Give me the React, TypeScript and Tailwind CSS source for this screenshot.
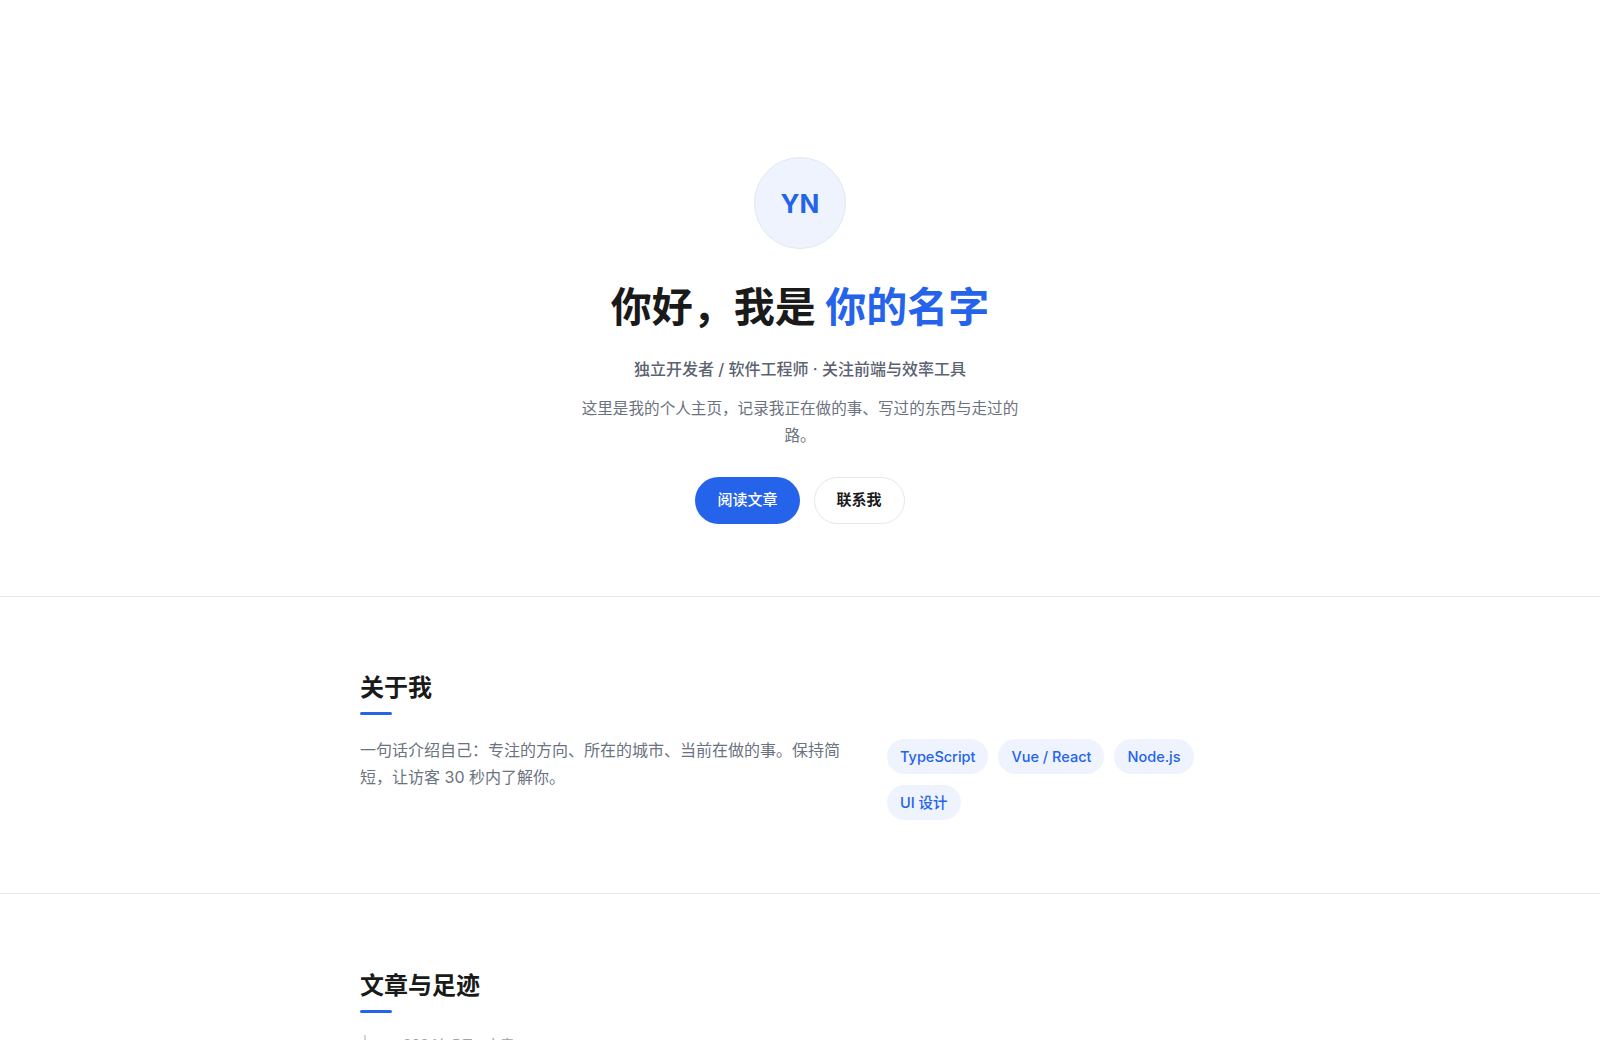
import React from 'react';

const FONT = 'font-[Inter,"Noto_Sans_CJK_SC",sans-serif]';

const skills = ['TypeScript', 'Vue / React', 'Node.js', 'UI 设计'];

const posts = [
  { meta: '2024年5月 · 文章', title: '从零搭建一个个人主页' },
  { meta: '2024年3月 · 足迹', title: '一次城市徒步的记录' },
];

function SectionTitle({ children }: { children: React.ReactNode }) {
  return (
    <div>
      <h2 className="text-[24px] leading-[32px] font-bold text-[#1a1a1a]">{children}</h2>
      <div className="mt-[8px] h-[3px] w-8 rounded-full bg-[#2563eb]" />
    </div>
  );
}

export default function App() {
  return (
    <div className={`${FONT} min-h-screen bg-white text-[#1a1a1a]`}>
      {/* Hero */}
      <header className="flex flex-col items-center pt-[157px] pb-[72px] text-center">
        <div className="flex h-[92px] w-[92px] items-center justify-center rounded-full border border-[#e2e7f0] bg-[#eef3fd] text-[26px] font-bold text-[#2563eb]">
          YN
        </div>
        <h1 className="mt-[34px] text-[41px] leading-[48px] font-bold tracking-normal text-[#1a1a1a]">
          你好，我是 <span className="text-[#2563eb]">你的名字</span>
        </h1>
        <p className="mt-[25px] text-[16px] leading-[26px] font-medium text-[#5b6270]">
          独立开发者 / 软件工程师 · 关注前端与效率工具
        </p>
        <p className="mt-[14px] max-w-[440px] text-[15.6px] leading-[26.5px] text-[#6b7280]">
          这里是我的个人主页，记录我正在做的事、写过的东西与走过的路。
        </p>
        <div className="mt-[28px] flex gap-[14px]">
          <button className="h-[47px] rounded-full bg-[#2563eb] px-[22px] text-[15px] font-medium text-white">
            阅读文章
          </button>
          <button className="h-[47px] rounded-full border border-[#e5e7eb] bg-white px-[22px] text-[15px] font-semibold text-[#1a1a1a]">
            联系我
          </button>
        </div>
      </header>

      {/* About */}
      <section className="border-t border-[#e5e7eb]">
        <div className="mx-auto max-w-[880px] pt-[75px] pb-[73px]">
          <SectionTitle>关于我</SectionTitle>
          <div className="mt-[22px] grid grid-cols-[487px_1fr] gap-10">
            <p className="text-[16px] leading-[27px] text-[#6b7280]">
              一句话介绍自己：专注的方向、所在的城市、当前在做的事。保持简短，让访客 30 秒内了解你。
            </p>
            <div className="mt-[2px] flex flex-wrap content-start gap-x-[10px] gap-y-[11px]">
              {skills.map((s) => (
                <span
                  key={s}
                  className="flex h-[35px] items-center rounded-full bg-[#eef3fd] px-[13px] text-[14.5px] font-medium text-[#2563eb]"
                >
                  {s}
                </span>
              ))}
            </div>
          </div>
        </div>
      </section>

      {/* Posts & footprints: a simple timeline */}
      <section className="border-t border-[#e5e7eb]">
        <div className="mx-auto max-w-[880px] pt-[76px] pb-[72px]">
          <SectionTitle>文章与足迹</SectionTitle>
          <ul className="mt-[22px] flex flex-col gap-6">
            {posts.map((p) => (
              <li key={p.title} className="flex">
                <div className="ml-[4px] w-[2px] shrink-0 bg-[#d1d5db]" />
                <div className="pl-[37px]">
                  <div className="text-[14px] leading-[20px] text-[#9ca3af]">{p.meta}</div>
                  <div className="mt-1 text-[16px] leading-[26px] font-medium text-[#1a1a1a]">{p.title}</div>
                </div>
              </li>
            ))}
          </ul>
        </div>
      </section>
    </div>
  );
}
